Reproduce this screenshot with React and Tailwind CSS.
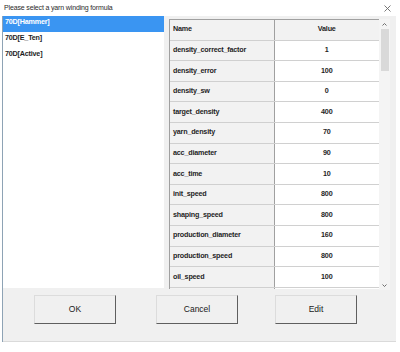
import React from "react";

const formulas = ["70D[Hammer]", "70D[E_Ten]", "70D[Active]"];

const params = [
  ["density_correct_factor", "1"],
  ["density_error", "100"],
  ["density_sw", "0"],
  ["target_density", "400"],
  ["yarn_density", "70"],
  ["acc_diameter", "90"],
  ["acc_time", "10"],
  ["init_speed", "800"],
  ["shaping_speed", "800"],
  ["production_diameter", "160"],
  ["production_speed", "800"],
  ["oil_speed", "100"],
];

function Button({ label, className = "" }) {
  return (
    <button
      className={
        "w-[82px] h-[29px] bg-[#f0f0f0] border border-t-[#dcdcdc] border-l-[#dcdcdc] border-r-[#5f5f5f] border-b-[#5f5f5f] text-[8.5px] text-[#1a1a1a] flex items-center justify-center " +
        className
      }
    >
      {label}
    </button>
  );
}

export default function App() {
  return (
    <div className="w-[400px] h-[352px] bg-white overflow-hidden font-['Liberation_Sans',Arial,sans-serif] text-[#1e1e1e]">
      {/* title bar */}
      <div className="h-[16px] flex items-center justify-between pl-[4px] pr-[9px] bg-white">
        <span className="text-[7px] tracking-[-0.15px] text-[#2a2a2a]">Please select a yarn winding formula</span>
        <svg width="7" height="7" viewBox="0 0 7 7">
          <path d="M0.5 0.5 L6.5 6.5 M6.5 0.5 L0.5 6.5" stroke="#6a6a6a" strokeWidth="0.9" />
        </svg>
      </div>

      <div className="ml-[2px] w-[394px] h-[326px] border-l border-[#8ea3b5] bg-[#f0f0f0] flex flex-col">
        <div className="flex h-[272px]">
          {/* formula list */}
          <div className="w-[161px] h-full bg-white">
            {formulas.map((f, i) => (
              <div
                key={f}
                className={
                  "h-[16px] pl-[2px] pt-[1px] text-[7.2px] tracking-[-0.2px] font-bold leading-[10px] " +
                  (i === 0 ? "bg-[#3a95f2] text-white" : "text-[#1e1e1e]")
                }
              >
                {f}
              </div>
            ))}
          </div>

          {/* parameter table */}
          <div className="flex pl-[5px] pt-[3px]">
            <div className="w-[210px] h-[270px] overflow-hidden border-l border-t border-[#a0a0a0]">
              <div className="flex h-[20.6px] bg-[#f2f2f2] border-b border-[#d0d0d0] text-[7.2px] font-bold tracking-[-0.2px]">
                <div className="w-[105px] border-r border-[#a0a0a0] flex items-center pl-[3px]">Name</div>
                <div className="w-[105px] flex items-center justify-center">Value</div>
              </div>
              {params.map(([name, value]) => (
                <div
                  key={name}
                  className="flex h-[20.6px] border-b border-[#d0d0d0] text-[7.2px] font-bold tracking-[-0.2px]"
                >
                  <div className="w-[105px] bg-[#f2f2f2] border-r border-[#a0a0a0] flex items-center pl-[3px]">
                    {name}
                  </div>
                  <div className="w-[105px] bg-white flex items-center justify-center">{value}</div>
                </div>
              ))}
              {/* next row, only its top edge shows */}
              <div className="flex h-[20.6px]">
                <div className="w-[105px] bg-[#f2f2f2] border-r border-[#a0a0a0]"></div>
                <div className="w-[105px] bg-white"></div>
              </div>
            </div>

            {/* scrollbar */}
            <div className="w-[11px] h-[271px] bg-[#f4f4f4] flex flex-col items-center">
              <div className="h-[10px] flex items-center justify-center">
                <svg width="5" height="3" viewBox="0 0 5 3">
                  <path d="M0.5 2.5 L2.5 0.5 L4.5 2.5" stroke="#606060" fill="none" strokeWidth="0.9" />
                </svg>
              </div>
              <div className="w-[8px] h-[42px] bg-[#d9d9d9]"></div>
              <div className="flex-1"></div>
              <div className="h-[10px] flex items-center justify-center">
                <svg width="5" height="3" viewBox="0 0 5 3">
                  <path d="M0.5 0.5 L2.5 2.5 L4.5 0.5" stroke="#606060" fill="none" strokeWidth="0.9" />
                </svg>
              </div>
            </div>
          </div>
        </div>

        {/* buttons */}
        <div className="flex h-[54px] pt-[7px] border-b border-[#dadada]">
          <Button label="OK" className="ml-[31px]" />
          <Button label="Cancel" className="ml-[40px]" />
          <Button label="Edit" className="ml-[37px]" />
        </div>
      </div>
    </div>
  );
}
